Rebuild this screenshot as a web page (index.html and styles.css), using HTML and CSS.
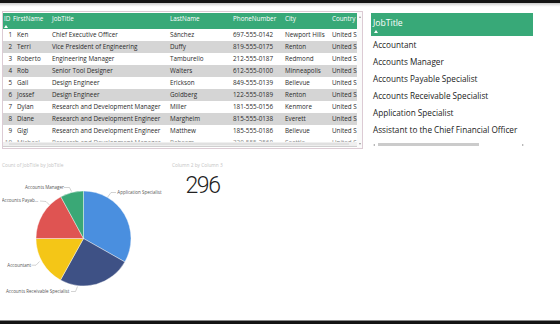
FILE: index.html
```html
<!DOCTYPE html>
<html>
<head>
<meta charset="utf-8">
<link rel="stylesheet" href="styles.css">
</head>
<body>
<div class="topbar"></div>
<div class="shade"></div>
<div class="main">
  <div class="top-row">
    <div class="tbl">
      <div class="tbl-body">
        <div class="hdr">
          <div class="c c-id">ID<i class="sort"></i></div>
          <div class="c c-fn">FirstName</div>
          <div class="c c-jt">JobTitle</div>
          <div class="c c-ln">LastName</div>
          <div class="c c-ph">PhoneNumber</div>
          <div class="c c-ci">City</div>
          <div class="c c-co">Country</div>
        </div>
        <div class="rows">
          <div class="r"><div class="c c-id">1</div><div class="c c-fn">Ken</div><div class="c c-jt">Chief Executive Officer</div><div class="c c-ln">Sánchez</div><div class="c c-ph">697-555-0142</div><div class="c c-ci">Newport Hills</div><div class="c c-co">United S</div></div>
          <div class="r alt"><div class="c c-id">2</div><div class="c c-fn">Terri</div><div class="c c-jt">Vice President of Engineering</div><div class="c c-ln">Duffy</div><div class="c c-ph">819-555-0175</div><div class="c c-ci">Renton</div><div class="c c-co">United S</div></div>
          <div class="r"><div class="c c-id">3</div><div class="c c-fn">Roberto</div><div class="c c-jt">Engineering Manager</div><div class="c c-ln">Tamburello</div><div class="c c-ph">212-555-0187</div><div class="c c-ci">Redmond</div><div class="c c-co">United S</div></div>
          <div class="r alt"><div class="c c-id">4</div><div class="c c-fn">Rob</div><div class="c c-jt">Senior Tool Designer</div><div class="c c-ln">Walters</div><div class="c c-ph">612-555-0100</div><div class="c c-ci">Minneapolis</div><div class="c c-co">United S</div></div>
          <div class="r"><div class="c c-id">5</div><div class="c c-fn">Gail</div><div class="c c-jt">Design Engineer</div><div class="c c-ln">Erickson</div><div class="c c-ph">849-555-0139</div><div class="c c-ci">Bellevue</div><div class="c c-co">United S</div></div>
          <div class="r alt"><div class="c c-id">6</div><div class="c c-fn">Jossef</div><div class="c c-jt">Design Engineer</div><div class="c c-ln">Goldberg</div><div class="c c-ph">122-555-0189</div><div class="c c-ci">Renton</div><div class="c c-co">United S</div></div>
          <div class="r"><div class="c c-id">7</div><div class="c c-fn">Dylan</div><div class="c c-jt">Research and Development Manager</div><div class="c c-ln">Miller</div><div class="c c-ph">181-555-0156</div><div class="c c-ci">Kenmore</div><div class="c c-co">United S</div></div>
          <div class="r alt"><div class="c c-id">8</div><div class="c c-fn">Diane</div><div class="c c-jt">Research and Development Engineer</div><div class="c c-ln">Margheim</div><div class="c c-ph">815-555-0138</div><div class="c c-ci">Everett</div><div class="c c-co">United S</div></div>
          <div class="r"><div class="c c-id">9</div><div class="c c-fn">Gigi</div><div class="c c-jt">Research and Development Engineer</div><div class="c c-ln">Matthew</div><div class="c c-ph">185-555-0186</div><div class="c c-ci">Bellevue</div><div class="c c-co">United S</div></div>
          <div class="r alt faint"><div class="c c-id">10</div><div class="c c-fn">Michael</div><div class="c c-jt">Research and Development Manager</div><div class="c c-ln">Raheem</div><div class="c c-ph">330-555-2568</div><div class="c c-ci">Seattle</div><div class="c c-co">United S</div></div>
        </div>
        <div class="hscroll"><span class="hthumb"></span></div>
      </div>
      <div class="vscroll"><span class="varrow up"></span><span class="varrow down"></span></div>
    </div>

    <div class="slicer">
      <div class="sl-hdr">JobTitle<i class="sort"></i></div>
      <div class="sl-item">Accountant</div>
      <div class="sl-item">Accounts Manager</div>
      <div class="sl-item">Accounts Payable Specialist</div>
      <div class="sl-item">Accounts Receivable Specialist</div>
      <div class="sl-item">Application Specialist</div>
      <div class="sl-item">Assistant to the Chief Financial Officer</div>
      <div class="sl-scroll"><span class="harrow left"></span><span class="sl-thumb"></span><span class="harrow right"></span></div>
    </div>
  </div>

  <div class="bottom-row">
    <div class="pie-visual">
      <div class="vis-title">Count of JobTitle by JobTitle</div>
      <svg class="pie" width="168" height="130" viewBox="2 170 168 130">
        <g stroke="#fff" stroke-width="0.4">
          <path d="M83.5,238.5 L83.5,191 A47.5,47.5 0 0 1 124.84,261.89 Z" fill="#4a8fdf"/>
          <path d="M83.5,238.5 L124.84,261.89 A47.5,47.5 0 0 1 60.47,280.05 Z" fill="#3e5185"/>
          <path d="M83.5,238.5 L60.47,280.05 A47.5,47.5 0 0 1 36,238.5 Z" fill="#f4c617"/>
          <path d="M83.5,238.5 L36,238.5 A47.5,47.5 0 0 1 60.83,196.76 Z" fill="#df5452"/>
          <path d="M83.5,238.5 L60.83,196.76 A47.5,47.5 0 0 1 83.5,191 Z" fill="#3aa876"/>
        </g>
        <g fill="none" stroke="#a6a6a6" stroke-width="0.5">
          <polyline points="64,187.5 69.5,187.5 71.5,191.5"/>
          <polyline points="40,201 46,201.5 49.5,205"/>
          <polyline points="107.5,197.3 111,192.5 116,192.5"/>
          <polyline points="31.5,265.2 36,265.2 39.5,261.5"/>
          <polyline points="71,291.5 75.5,291.5 77.5,286.5"/>
        </g>
        <g class="lbl">
          <text x="25" y="189">Accounts Manager</text>
          <text x="1.7" y="202.4">Accounts Payab...</text>
          <text x="117.3" y="193.7">Application Specialist</text>
          <text x="7.3" y="266.7">Accountant</text>
          <text x="6" y="293.4">Accounts Receivable Specialist</text>
        </g>
      </svg>
    </div>
    <div class="card">
      <div class="vis-title">Column 2 by Column 3</div>
      <div class="card-num">296</div>
    </div>
  </div>
</div>
<div class="bottombar"></div>
</body>
</html>
```

FILE: styles.css
```css
* { box-sizing: border-box; }
html, body { margin: 0; padding: 0; }
body {
  width: 560px;
  height: 324px;
  overflow: hidden;
  background: #fff;
  display: flex;
  flex-direction: column;
  font-family: "Open Sans", "Liberation Sans", sans-serif;
  color: #262626;
}
.topbar { height: 3px; background: #141414; flex: none; }
.shade { height: 4px; background: linear-gradient(#c9c9c9, #f4f4f4 70%, #fff); flex: none; }
.main { flex: 1; padding: 4px 0 0 2px; display: flex; flex-direction: column; }
.bottombar { height: 4px; flex: none; background: #141414; border-top: 1px solid #8a8a8a; }

.top-row { display: flex; align-items: flex-start; }

/* table visual */
.tbl {
  width: 361px;
  height: 138px;
  border: 1px solid #dccbd4;
  display: flex;
}
.tbl-body {
  width: 354px;
  padding-top: 1px;
  display: flex;
  flex-direction: column;
  overflow: hidden;
}
.hdr, .r {
  display: grid;
  grid-template-columns: 10px 38px 118px 63px 52px 47px 26px;
  white-space: nowrap;
}
.hdr {
  height: 16px;
  background: #38a978;
  color: #fff;
  font-size: 6.3px;
  line-height: 8px;
  padding-top: 2px;
}
.rows { height: 113px; overflow: hidden; flex: none; }
.r {
  height: 12px;
  line-height: 12px;
  font-size: 6.3px;
  color: #2b2b2b;
}
.r.alt { background: #d5d5d5; }
.r.faint { background: #fff; color: #8c8c8c; }
.c { overflow: hidden; padding-left: 1px; }
.r .c-id { text-align: right; padding: 0 1px 0 0; }
.r .c-fn { padding-left: 4px; }
.hdr .c-fn { padding-left: 0; }
.sort {
  display: block;
  width: 0; height: 0;
  margin-top: 2px;
  border-left: 2px solid transparent;
  border-right: 2px solid transparent;
  border-bottom: 3px solid #fff;
}
.hscroll {
  height: 5px;
  background: #efefef;
  border-bottom: 1px solid #cfcfcf;
  flex: none;
  display: flex;
  align-items: center;
  padding: 0 6px;
}
.hthumb { display: block; height: 2px; width: 340px; background: #e0e0e0; }
.vscroll {
  width: 5px;
  display: flex;
  flex-direction: column;
  justify-content: space-between;
  align-items: center;
  padding: 4px 0 3px;
  background: #fafafa;
}
.varrow { width: 0; height: 0; border-left: 1.5px solid transparent; border-right: 1.5px solid transparent; }
.varrow.up { border-bottom: 2px solid #9a9a9a; }
.varrow.down { border-top: 2px solid #9a9a9a; }

/* slicer */
.slicer {
  width: 162px;
  margin: 2px 0 0 8px;
  font-size: 8.2px;
}
.sl-hdr {
  height: 23px;
  background: #38a978;
  color: #fff;
  padding: 5px 0 0 2px;
  line-height: 10px;
  font-size: 8.6px;
}
.sl-hdr .sort { margin: 2px 0 0 1px; }
.sl-item {
  height: 17px;
  line-height: 17px;
  padding-left: 2px;
  color: #222;
  white-space: nowrap;
}
.sl-scroll {
  margin: 5px 0 0 2px;
  width: 156px;
  height: 3px;
  display: flex;
  align-items: center;
  gap: 3px;
}
.harrow { width: 0; height: 0; border-top: 1.2px solid transparent; border-bottom: 1.2px solid transparent; }
.harrow.left { border-right: 2px solid #a0a0a0; }
.harrow.right { border-left: 2px solid #a0a0a0; margin-left: auto; margin-right: 5px; }
.sl-thumb { display: block; width: 101px; height: 3px; background: #cbcbcb; }

/* bottom visuals */
.bottom-row { display: flex; margin-top: 11px; }
.pie-visual { width: 168px; }
.vis-title {
  height: 10px;
  line-height: 10px;
  font-size: 4.8px;
  color: #c4c4c4;
  white-space: nowrap;
}
.pie { display: block; }
.lbl text { font-family: "Open Sans", "Liberation Sans", sans-serif; font-size: 4.5px; fill: #555; }
.card { width: 65px; }
.card .vis-title { padding-left: 2px; }
.card-num {
  margin-top: 4px;
  text-align: center;
  font-family: Roboto, "Open Sans", sans-serif;
  font-weight: 300;
  font-size: 23px;
  line-height: 24px;
  letter-spacing: -1.4px;
  color: #222;
}
```
